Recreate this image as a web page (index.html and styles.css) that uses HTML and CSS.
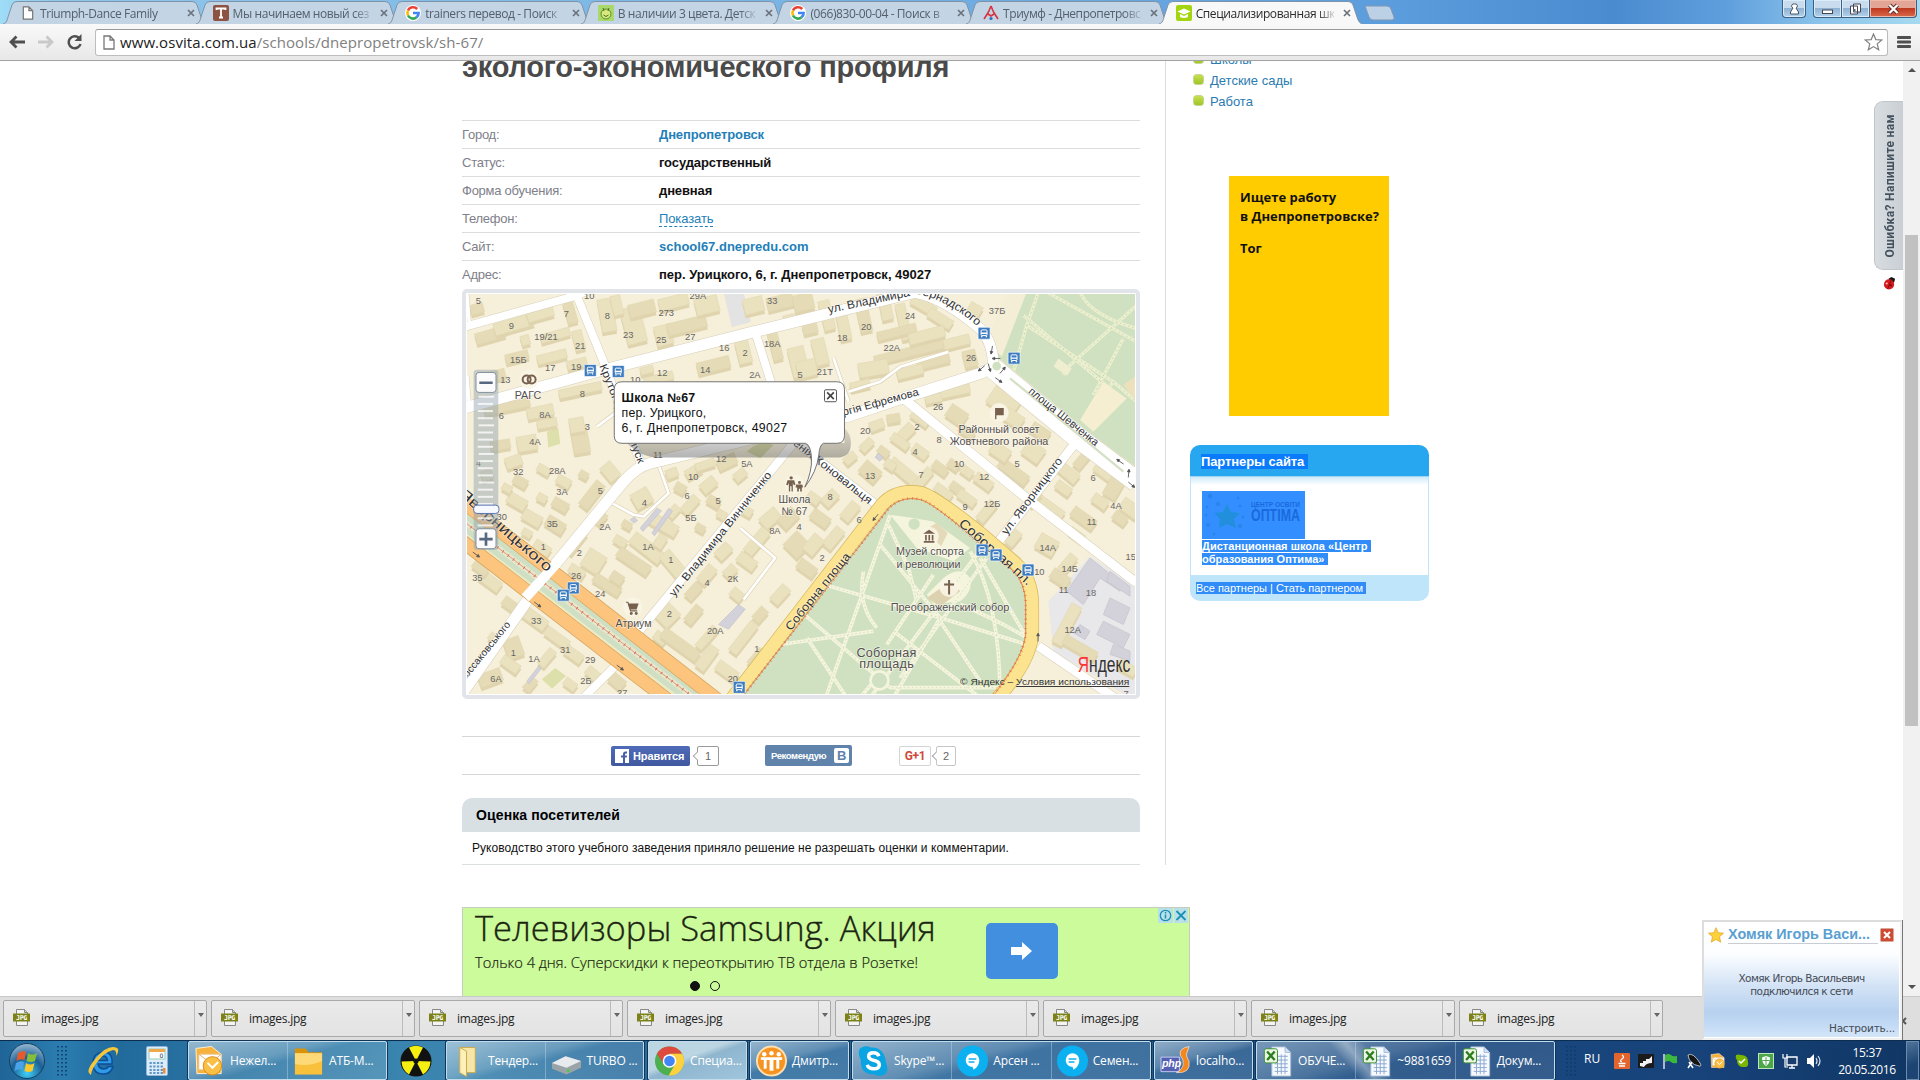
FILE: index.html
```html
<!DOCTYPE html>
<html lang="ru">
<head>
<meta charset="utf-8">
<title>Специализированная школа</title>
<link rel="stylesheet" href="styles.css">
</head>
<body>
<svg class="defs" width="0" height="0">
  <defs>
    <symbol id="tabshape" viewBox="0 0 204 24" preserveAspectRatio="none"><path d="M0 24 C4 23 4 20 6 14 L9 5 Q10 1.5 14 1.5 H189 Q193 1.5 194 5 L198 17 Q200 24 204 24" stroke="#7f93a8"/></symbol>
    <symbol id="page" viewBox="0 0 12 15"><path d="M1 1h6l4 4v9H1zM7 1v4h4" fill="#fff" stroke="#777" stroke-width="1.3"/></symbol>
    <symbol id="google" viewBox="0 0 16 16"><circle cx="8" cy="8" r="8" fill="#fff"/><g fill="none" stroke-width="2.6"><path d="M12.2 4A5.6 5.6 0 0 0 3 5.5" stroke="#e94335"/><path d="M3 5.5a5.6 5.6 0 0 0 0 5" stroke="#fbbc05"/><path d="M3 10.5a5.6 5.6 0 0 0 8.6 1.8" stroke="#34a853"/><path d="M11.6 12.3A5.6 5.6 0 0 0 13.6 8H8" stroke="#4285f4"/></g></symbol>
    <symbol id="x" viewBox="0 0 8 8"><path d="M1 1l6 6M7 1L1 7" stroke="#6a737c" stroke-width="1.7"/></symbol>
    <symbol id="jpg" viewBox="0 0 17 17"><path d="M3.500.5h8l3 3v13h-11z" fill="#f4f4f4" stroke="#888"/><path d="M11.500.5v3h3" fill="#ccc" stroke="#888"/><path d="M0 4.500h17v8H0z" fill="#7d8216"/><text x="8.500" y="11.200" text-anchor="middle" class="jpgtext">JPG</text></symbol>
    <symbol id="excel" viewBox="0 0 30 34"><path d="M9 2h14l6 6v25H9z" fill="#f6faff" stroke="#a8bcd4"/><path d="M23 2v6h6" fill="#cfe0f2" stroke="#a8bcd4"/><path d="M12 12h14M12 16h14M12 20h14M12 24h14M12 28h14M15 10v21M19 10v21M23 10v21" stroke="#8aa6cf" fill="none"/><rect x="1" y="4" width="14" height="15" rx="2" fill="#e9f6e4" stroke="#3b8f2e"/><path d="M4 7l8 9M12 7l-8 9" stroke="#2b7d1e" stroke-width="2.500"/></symbol>
    <symbol id="chat" viewBox="0 0 32 32"><circle cx="16" cy="16" r="16" fill="#0bb0f0"/><path d="M16 8a7 7 0 0 0-7 7c0 5 4 7 7 7l1 3c4-2 6-6 6-10a7 7 0 0 0-7-7z" fill="#fff"/><path d="M12 14h8M12 17h6" stroke="#0bb0f0" stroke-width="1.500"/></symbol>
    <symbol id="outlook" viewBox="0 0 32 32"><path d="M2 3 18 1l10 8v20H3z" fill="#f6b23c" stroke="#fff3d6"/><path d="M5 9h23v16H5z" fill="#fff" stroke="#e6c79a"/><path d="M5 9l12 9L28 9" fill="none" stroke="#e6b36a"/><circle cx="19" cy="21" r="9.500" fill="#f9c045" stroke="#d98a12"/><path d="M14 18l5 5 6-6" fill="none" stroke="#fff" stroke-width="2"/></symbol>
    <symbol id="grip" viewBox="0 0 10 30"><path d="M1 0v30M5 0v30M9 0v30" stroke="#0e3a66" stroke-width="1.600" stroke-dasharray="1.600 2.400"/></symbol>
  </defs>
</svg>

<div class="desktop">
  <header class="titlebar">
    <div class="tabs">
      <div class="tab"><svg class="shape"><use href="#tabshape"/></svg><svg class="fav thin"><use href="#page"/></svg><span class="name">Triumph-Dance Family</span><svg class="close"><use href="#x"/></svg></div>
      <div class="tab"><svg class="shape"><use href="#tabshape"/></svg><svg class="fav" viewBox="0 0 16 16"><rect width="16" height="16" rx="2" fill="#8d5342"/><path d="M3.500 5V3.500h9V5M8 3.500v9M6 12.500h4" stroke="#fff" stroke-width="1.800" fill="none"/></svg><span class="name">Мы начинаем новый сез</span><svg class="close"><use href="#x"/></svg></div>
      <div class="tab"><svg class="shape"><use href="#tabshape"/></svg><svg class="fav"><use href="#google"/></svg><span class="name">trainers перевод - Поиск</span><svg class="close"><use href="#x"/></svg></div>
      <div class="tab"><svg class="shape"><use href="#tabshape"/></svg><svg class="fav" viewBox="0 0 16 16"><rect width="16" height="16" fill="#a9d96b"/><circle cx="8" cy="9" r="5" fill="#d9e87a" stroke="#5d8a2c"/><path d="M5 3l1 3M11 3l-1 3M5.500 10q2.500 3 5 0" stroke="#466b22" fill="none"/></svg><span class="name">В наличии 3 цвета. Детск</span><svg class="close"><use href="#x"/></svg></div>
      <div class="tab"><svg class="shape"><use href="#tabshape"/></svg><svg class="fav"><use href="#google"/></svg><span class="name">(066)830-00-04 - Поиск в</span><svg class="close"><use href="#x"/></svg></div>
      <div class="tab"><svg class="shape"><use href="#tabshape"/></svg><svg class="fav" viewBox="0 0 16 16"><path d="M8 1L5.500 7M8 1l2.500 6M5.500 7L1 14M10.500 7L15 14M5 9l3 2 3-2" stroke="#d8323c" stroke-width="1.600" fill="none"/><circle cx="8" cy="13.500" r="1.600" fill="#2a6fc0"/></svg><span class="name">Триумф - Днепропетровс</span><svg class="close"><use href="#x"/></svg></div>
      <div class="tab active"><svg class="shape"><use href="#tabshape"/></svg><svg class="fav" viewBox="0 0 16 16"><rect width="16" height="16" rx="2" fill="#a2d50f"/><path d="M1.500 6.500L8 3.500l6.500 3L8 9.500zM4 9v3q4 2 8 0V9l-4 2z" fill="#fff"/></svg><span class="name">Специализированная шк</span><svg class="close"><use href="#x"/></svg></div>
    </div>
    <svg class="newtab" viewBox="0 0 32 16"><path d="M1 1h22q3 0 4 3l3 8q1 3-2 3H9q-3 0-4-3z" fill="#bcd0e6" stroke="#7f97b5"/></svg>
    <div class="winbtns">
      <div class="wb user"><svg viewBox="0 0 10 12"><path d="M5 1a2 2 0 0 1 1.500 4L9 9v2H1V9l2.500-4A2 2 0 0 1 5 1z" fill="#fff" stroke="#456"/></svg></div>
      <div class="wb min"><svg viewBox="0 0 12 12"><rect x="1" y="7" width="10" height="3.500" fill="#fff" stroke="#445"/></svg></div>
      <div class="wb max"><svg viewBox="0 0 12 12"><path d="M4 1h7v8H4zM1 3h7v8H1z" fill="#fff" stroke="#445"/><path d="M3.500 6h2.500v2.500H3.500z" fill="#567"/></svg></div>
      <div class="wb cls"><svg viewBox="0 0 12 12"><path d="M2 2l8 8M10 2l-8 8" stroke="#5b2a26" stroke-width="4"/><path d="M2 2l8 8M10 2l-8 8" stroke="#fff" stroke-width="2.300"/></svg></div>
    </div>
  </header>

  <nav class="toolbar">
    <svg class="nav" viewBox="0 0 18 16"><path d="M17 8H3M8.500 2.500L3 8l5.500 5.500" fill="none" stroke="#4f4f4f" stroke-width="2.800"/></svg>
    <svg class="nav" viewBox="0 0 18 16"><path d="M1 8h14M9.500 2.500L15 8l-5.500 5.500" fill="none" stroke="#c9c9c9" stroke-width="2.800"/></svg>
    <svg class="nav" viewBox="0 0 18 16"><path d="M14.500 10A6 6 0 1 1 13 4" fill="none" stroke="#4f4f4f" stroke-width="2.500"/><path d="M15.500 0v7h-7z" fill="#4f4f4f"/></svg>
    <div class="omnibox"><svg class="pg"><use href="#page"/></svg><span class="url"><b>www.osvita.com.ua</b>/schools/dnepropetrovsk/sh-67/</span>
      <svg class="star" viewBox="0 0 18 18"><path d="M9 1l2.300 5.600 6 .4-4.600 3.900 1.500 5.900L9 13.600l-5.200 3.200 1.500-5.900L.7 7l6-.4z" fill="#fff" stroke="#808080" stroke-width="1.200"/></svg></div>
    <svg class="menu" viewBox="0 0 14 14"><path d="M1 2.500h12M1 7h12M1 11.500h12" stroke="#505050" stroke-width="2.800" stroke-linecap="round"/></svg>
  </nav>

  <div class="viewport">
    <main class="main">
      <h1>эколого-экономического профиля</h1>
      <dl class="info">
        <div><dt>Город:</dt><dd class="lk">Днепропетровск</dd></div>
        <div><dt>Статус:</dt><dd>государственный</dd></div>
        <div><dt>Форма обучения:</dt><dd>дневная</dd></div>
        <div><dt>Телефон:</dt><dd><span class="show">Показать</span></dd></div>
        <div><dt>Сайт:</dt><dd class="lk site">school67.dnepredu.com</dd></div>
        <div><dt>Адрес:</dt><dd class="addr">пер. Урицкого, 6, г. Днепропетровск, 49027</dd></div>
      </dl>
      <div class="map"><svg id="map" viewBox="20 26 2005 1203" preserveAspectRatio="none"></svg></div>

      <div class="social">
        <div class="fb"><svg viewBox="0 0 14 14"><rect width="14" height="14" fill="#fff"/><path d="M8 14V8.500h-2V6.500h2V5q0-2.500 2.500-2.500H12v2h-1Q10 4.500 10 5.500v1h2l-.3 2H10V14z" fill="#4760aa"/></svg>Нравится</div><div class="cnt dark">1</div>
        <div class="vk">Рекомендую<span>B</span></div>
        <div class="gp">G+1</div><div class="cnt">2</div>
      </div>

      <h2 class="rate">Оценка посетителей</h2>
      <p class="note">Руководство этого учебного заведения приняло решение не разрешать оценки и комментарии.</p>

      <div class="banner">
        <div class="copy">
          <div class="big">Телевизоры Samsung. Акция</div>
          <div class="small">Только 4 дня. Суперскидки к переоткрытию ТВ отдела в Розетке!</div>
          <div class="dots"><i class="on"></i><i></i></div>
        </div>
        <div class="go"><svg viewBox="0 0 22 20"><path d="M0 6h11V1l10 9-10 9v-5H0z" fill="#fff"/></svg></div>
        <div class="choices"><svg viewBox="0 0 30 15"><rect width="15" height="15" fill="#b9dfe8"/><rect x="16" width="14" height="15" fill="#b9dfe8"/><circle cx="7.500" cy="7.500" r="5.200" fill="none" stroke="#1791b5" stroke-width="1.300"/><path d="M7.500 6.500v4M7.500 4v1.500" stroke="#1791b5" stroke-width="1.500"/><path d="M18.500 3l9 9M27.500 3l-9 9" stroke="#1791b5" stroke-width="1.800"/></svg></div>
      </div>
    </main>

    <aside class="side">
      <ul class="links"><li>Школы</li><li>Детские сады</li><li>Работа</li></ul>
      <div class="job"><p>Ищете работу<br>в Днепропетровске?</p><p>Тог</p></div>
      <section class="partners">
        <h3><span>Партнеры сайта&nbsp;</span></h3>
        <div class="pbody">
          <svg class="optima" viewBox="0 0 103 48"><rect width="103" height="48" fill="#338fff"/><path d="M25 13l4 8 9 1-6 6 2 9-9-4-8 4 1-9-6-6 9-1z" fill="#218fdc"/><g fill="#2a84ea"><circle cx="8" cy="5" r="2.500"/><circle cx="16" cy="13" r="2"/><circle cx="5" cy="16" r="1.500"/><circle cx="36" cy="7" r="1.500"/><circle cx="38" cy="15" r="1.500"/><circle cx="4" cy="24" r="1.500"/><circle cx="41" cy="26" r="1.500"/><circle cx="6" cy="34" r="2"/><circle cx="12" cy="43" r="1.500"/><circle cx="38" cy="35" r="2"/></g><text x="49" y="15.500" textLength="49" class="o1">ЦЕНТР ОСВІТИ</text><text x="49" y="30" textLength="49" lengthAdjust="spacingAndGlyphs" class="o2">ОПТІМА</text></svg>
          <p><span>Дистанционная школа «Центр&nbsp;</span><br><span>образования Оптима»&nbsp;</span></p>
        </div>
        <footer><span>Все партнеры | Стать партнером&nbsp;</span></footer>
      </section>
    </aside>

    <div class="feedback"><div class="fbtab"><span>Ошибка? Напишите нам</span></div>
      <svg class="bug" viewBox="0 0 14 16"><path d="M6 3l3-2 4 2-1 4-5 0z" fill="#151515"/><ellipse cx="6.500" cy="9" rx="5.500" ry="5.500" fill="#d6191d"/><path d="M9 4L5 14" stroke="#7b0c0c"/><circle cx="4" cy="8" r="1.200" fill="#fbb"/><circle cx="8.500" cy="10" r="1" fill="#500"/></svg></div>
    <div class="scroll"><svg viewBox="0 0 10 6"><path d="M0 6L5 1l5 5z" fill="#505050"/></svg><div class="thumb"></div><svg viewBox="0 0 10 6"><path d="M0 0l5 5 5-5z" fill="#505050"/></svg></div>
  </div>

  <div class="downloads">
    <div class="dl"><svg><use href="#jpg"/></svg><span>images.jpg</span><i></i></div><div class="dl"><svg><use href="#jpg"/></svg><span>images.jpg</span><i></i></div><div class="dl"><svg><use href="#jpg"/></svg><span>images.jpg</span><i></i></div><div class="dl"><svg><use href="#jpg"/></svg><span>images.jpg</span><i></i></div><div class="dl"><svg><use href="#jpg"/></svg><span>images.jpg</span><i></i></div><div class="dl"><svg><use href="#jpg"/></svg><span>images.jpg</span><i></i></div><div class="dl"><svg><use href="#jpg"/></svg><span>images.jpg</span><i></i></div><div class="dl"><svg><use href="#jpg"/></svg><span>images.jpg</span><i></i></div>
    <svg class="dlx" viewBox="0 0 8 8"><path d="M1 1l6 6M7 1L1 7" stroke="#555" stroke-width="2"/></svg>
  </div>

  <div class="taskbar">
    <svg class="orb" viewBox="0 0 38 38"><defs><radialGradient id="og" cx=".5" cy=".85" r=".9"><stop offset="0" stop-color="#3fd0f8"/><stop offset=".5" stop-color="#1c5f94"/><stop offset="1" stop-color="#a9c6da"/></radialGradient></defs><circle cx="19" cy="19" r="17.500" fill="url(#og)" stroke="#123f63"/><path d="M10 11q4-3 8-1l-1.500 8q-4-2-8 1z" fill="#e8592c"/><path d="M20 11q4 3 9 0l-2 8q-4 2-8.500 0z" fill="#86bf3a"/><path d="M8 21q4-3 8-1l-1.500 8q-4-2-8 1z" fill="#4aa3e8"/><path d="M18 21q4 3 8.500 0l-2 8q-4 2-8 0z" fill="#fac92c"/></svg>
    <svg class="grip g1"><use href="#grip"/></svg>
    <svg class="ie" viewBox="0 0 34 32"><path d="M26 19H12q1 5 6 5 3 0 4.500-2.500H27Q25 29 17.500 29 7 29 7 18.500T17.500 7Q27 7 26 19zM12 15.500h9.500Q21 11 17 11t-5 4.500z" fill="#2f9be8" stroke="#0c4f96" stroke-width="1.500"/><path d="M5 30Q-2 27 10 13T31 3q3 2-1 8 1-6-3-6-8 2-15 11T5 30z" fill="#f5c53a"/></svg>
    <svg class="calc" viewBox="0 0 22 30"><rect x=".5" y=".5" width="21" height="29" rx="1.500" fill="#dcecf8" stroke="#8fb4d4"/><rect x="3" y="3" width="16" height="10" fill="#fbfdff" stroke="#9cb"/><path d="M3 3h16v3H3z" fill="#efa94b"/><path d="M3.500 17h14M3.500 20.500h14M3.500 24h14M3.500 27h14" stroke="#5f96c8" stroke-width="2" stroke-dasharray="2.300 1.400"/><path d="M17 22h2.500v5.500H17z" fill="#ee8d2c"/><text x="13.500" y="12" class="z">0</text></svg>

    <div class="grp w2"><div><svg viewBox="0 0 32 32"><use href="#outlook"/></svg><span>Нежел...</span></div><div><svg viewBox="0 0 32 32"><path d="M2 3h11l3 4h14v22H2z" fill="#d9930b"/><path d="M2 8h28v22H2z" fill="#f9c03c"/><path d="M2 8h28v8q-14 6-28 3z" fill="#fdda77"/></svg><span>АТБ-М...</span></div></div>
    <svg class="rad" viewBox="0 0 32 32"><circle cx="16" cy="16" r="15.500" fill="#111"/><path d="M16 16L9 2.500Q16-1 23 2.500zM16 16L1.500 16.500Q2 25 9 29.500zM16 16l14.500.5Q30 25 23 29.500z" fill="#f5ef12"/><circle cx="16" cy="16" r="2.600" fill="#111"/></svg>
    <div class="grp w2b"><div><svg viewBox="0 0 32 32"><path d="M8 2h16v26H8z" fill="#f6e6a8" stroke="#c9a94a"/><path d="M8 2l7 4v26l-7-4z" fill="#fdf0b9" stroke="#cba94b"/></svg><span>Тендер...</span></div><div><svg viewBox="0 0 32 32"><path d="M1 18L15 11l16 5v7l-15 7-15-6z" fill="#9aa3a8"/><path d="M1 18L15 11l16 5-15 7z" fill="#e7ebee"/><circle cx="18" cy="26" r="1.500" fill="#4c4"/></svg><span>TURBO ...</span></div></div>
    <div class="grp w1 lit"><div><svg viewBox="0 0 32 32"><circle cx="16" cy="16" r="15" fill="#4caf50"/><path d="M3 8.500A15 15 0 0 1 29 8.500H16L10 19z" fill="#dd4b3e"/><path d="M29 8.500A15 15 0 0 1 15 31l7-12-6-10.500z" fill="#fdd23e"/><circle cx="16" cy="16" r="7" fill="#fff"/><circle cx="16" cy="16" r="5.500" fill="#4285f4"/></svg><span>Специа...</span></div></div>
    <div class="grp w1"><div><svg viewBox="0 0 32 32"><circle cx="16" cy="16" r="15" fill="#f79421" stroke="#fde0b0" stroke-width="2"/><g fill="#fff"><circle cx="8.500" cy="9" r="2.300"/><circle cx="16" cy="8" r="2.300"/><circle cx="23.500" cy="9" r="2.300"/><path d="M5 12h22v3h-3v9h-3v-9h-3v11h-4V15h-3v9H8v-9H5z"/></g></svg><span>Дмитр...</span></div></div>
    <div class="grp w3"><div><svg viewBox="0 0 32 32"><path d="M2 3Q8-1 13 2 27 1 29 18q4 10-4 13-5 1-8-1Q2 30 3 15-1 8 2 3z" fill="#0aa4e2"/><path d="M21.500 11q-1-3.500-5.500-3.500-5 0-5 3.500 0 3 5 4.200 6 1.200 6 4.800 0 4-6 4-5 0-6.500-4" fill="none" stroke="#fff" stroke-width="3.600"/></svg><span>Skype™...</span></div><div><svg><use href="#chat"/></svg><span>Арсен ...</span></div><div><svg><use href="#chat"/></svg><span>Семен...</span></div></div>
    <div class="grp w1"><div><svg viewBox="0 0 32 32"><path d="M1 12h19v15H1z" fill="#5560b4" stroke="#c8cbee"/><text x="2" y="22" class="php">php</text><path d="M30 1q-11 2-9 9 4 5 3 10-1 5-7 8 15 1 13-12-4-6-2-9z" fill="#f5871f" stroke="#fff" stroke-width=".6"/></svg><span>localho...</span></div></div>
    <div class="grp w3 xl"><div><svg><use href="#excel"/></svg><span>ОБУЧЕ...</span></div><div><svg><use href="#excel"/></svg><span>~9881659</span></div><div><svg><use href="#excel"/></svg><span>Докум...</span></div></div>
    <svg class="grip g2"><use href="#grip"/></svg>
    <span class="lang">RU</span>
    <div class="tray">
      <svg viewBox="0 0 16 16"><rect width="16" height="16" rx="1" fill="#e3642c"/><path d="M8 2q3 2 0 4t0 3M4.500 10.500h7M5 13h6" stroke="#fff" fill="none" stroke-width="1.300"/></svg>
      <svg viewBox="0 0 16 16"><rect y="1" width="16" height="14" fill="#1b1b1b"/><path d="M2 13v-3h3V8h3V6h3L14 3v7q-6 0-8 4z" fill="#f2f2f2"/></svg>
      <svg viewBox="0 0 16 16"><path d="M2 1v15" stroke="#dde" stroke-width="1.500"/><path d="M3 2q4-2 6 0t6 1v7q-4 1-6-1T3 9z" fill="#3db83f"/></svg>
      <svg viewBox="0 0 16 16"><path d="M2 2q5-3 12 8 2 4-1 3Q3 11 2 2z" fill="#151515" stroke="#ddd" stroke-width=".8"/><path d="M3 9l4 6M6 9l-4 6" stroke="#fff" stroke-width="1.500"/></svg>
      <svg viewBox="0 0 32 32"><use href="#outlook"/></svg>
      <svg viewBox="0 0 16 16"><path d="M2 2q3-1 5 0 7 0 7 7 1 5-3 5-8 1-8-7-2-2-1-5z" fill="#7ab800"/><path d="M5 8l2 2 4-4" stroke="#fff" fill="none" stroke-width="1.500"/></svg>
      <svg viewBox="0 0 16 16"><rect x=".5" y=".5" width="15" height="15" fill="#4ca64a" stroke="#bfe5bd"/><path d="M8 3l4 1.500q0 6-4 8.500-4-2.500-4-8.500z" fill="#fff"/><path d="M8 4v8M4.500 7.500h7" stroke="#4ca64a"/></svg>
      <svg viewBox="0 0 16 16"><path d="M5 4h10v8H5zM7 15h6M10 12v3" fill="#1b3d6b" stroke="#fff" stroke-width="1.300"/><path d="M1 1v4h4V1M3 5v9h3" fill="none" stroke="#fff" stroke-width="1.200"/></svg>
      <svg viewBox="0 0 16 16"><path d="M1 5h3l4-4v14l-4-4H1z" fill="#fff"/><path d="M10 5q2 3 0 6M12 3q4 5 0 10" fill="none" stroke="#dfe9f5" stroke-width="1.200"/></svg>
    </div>
    <div class="clock">15:37<br>20.05.2016</div>
    <div class="peek"></div>
  </div>

  <div class="toast">
    <div class="thead"><svg viewBox="0 0 16 16"><path d="M8 .7l2.200 5 5.300.5-4 3.600 1.200 5.400L8 12.400l-4.700 2.800 1.200-5.400-4-3.600 5.300-.5z" fill="#fbd23c" stroke="#e0a01c" stroke-width=".7"/></svg><b>Хомяк Игорь Васи...</b><svg class="tx" viewBox="0 0 14 14"><rect x=".5" y=".5" width="13" height="13" rx="1" fill="#cf4a33" stroke="#d9a79e"/><path d="M4 4l6 6M10 4l-6 6" stroke="#fff" stroke-width="2"/></svg></div>
    <p>Хомяк Игорь Васильевич<br>подключился к сети</p>
    <div class="conf">Настроить...</div>
  </div>
</div>
<script src="map.js"></script>
</body>
</html>
```

FILE: styles.css
```css
* { box-sizing: border-box; }
body { margin: 0; width: 1920px; height: 1080px; overflow: hidden; background: #fff; font-family: "Liberation Sans", Arial, sans-serif; }
p, h1, h2, h3, dl, dd, ul { margin: 0; padding: 0; }
.defs { position: absolute; }
.desktop { position: relative; width: 1920px; height: 1080px; display: flex; flex-direction: column; }

/* tab strip */
.titlebar { flex: none; height: 24px; display: flex; background: linear-gradient(90deg, #9fdcf6 0, #8fc6ec 60px, #78b4e4 40%, #5b9cdc 73%, #4a8bd0 84%, #5f9fdd 90%, #8cc4ea 95%, #a6daf0 100%); font: 12px "Open Sans", sans-serif; }
.tabs { display: flex; padding-left: 3px; }
.tab { position: relative; width: 204px; margin-right: -11.4px; height: 24px; display: flex; align-items: center; padding: 2px 14px 0 17px; color: #54606c; }
.shape { position: absolute; left: 0; top: 0; width: 204px; height: 24px; fill: #c3d4e5; }
.active .shape { fill: #f8f8f8; }
.active { color: #2b2b2b; z-index: 2; }
.fav { position: relative; flex: none; width: 16px; height: 16px; }
.fav.thin { width: 16px; height: 14px; }
.name { position: relative; width: 138px; margin-left: 4px; flex: none; overflow: hidden; white-space: nowrap; letter-spacing: -.42px; -webkit-mask-image: linear-gradient(90deg, #000 88%, rgba(0,0,0,.2)); mask-image: linear-gradient(90deg, #000 88%, rgba(0,0,0,.2)); }
.close { position: relative; flex: none; width: 8px; height: 8px; margin-left: 9px; }
.newtab { width: 32px; height: 16px; margin: 5px 0 0 13px; }
.winbtns { display: flex; margin: 0 3px 0 auto; height: 18px; }
.wb { display: flex; align-items: center; justify-content: center; height: 18px; border: 1px solid #3c5f85; border-top: 0; background: linear-gradient(#c8dcee 45%, #8fb2d2 50%, #b4d2ea); box-shadow: inset 0 0 0 1px #dcebf8; }
.wb svg { width: 13px; height: 12px; }
.user { width: 24px; margin-right: 7px; border-radius: 0 0 4px 4px; }
.min { width: 29px; border-radius: 0 0 0 4px; }
.max { width: 28px; border-left: 0; }
.cls { width: 47px; border-left: 0; border-radius: 0 0 4px 0; background: linear-gradient(#e2a596 45%, #bf3a21 50%, #d9694a); box-shadow: inset 0 0 0 1px #edb9a8; }

/* toolbar */
.toolbar { flex: none; height: 37px; display: flex; align-items: center; padding: 0 9px 0 8px; background: linear-gradient(#f9f9f9, #e8e8e8); border-bottom: 1px solid #a3a3a3; }
.nav { width: 18px; height: 16px; margin-right: 11px; }
.omnibox { width: 1793px; height: 27px; display: flex; align-items: center; background: #fff; border: 1px solid #bdbdbd; border-top-color: #999; border-radius: 3px; padding: 0 4px 0 7px; }
.pg { width: 12px; height: 15px; margin-right: 5px; }
.url { font: 15px "Open Sans", sans-serif; letter-spacing: .07px; color: #808080; flex: 1; }
.url b { font-weight: 400; color: #222; }
.star { width: 19px; height: 18px; }
.menu { width: 14px; height: 14px; margin-left: auto; }

/* page */
.viewport { flex: none; height: 935px; position: relative; overflow: hidden; display: flex; padding-left: 462px; }
.main { width: 704px; height: 804px; border-right: 1px solid #dcdcdc; flex: none; }
.main > * { width: 678px; }
h1 { height: 71px; font-size: 29px; line-height: 34px; margin-top: -12px; padding-top: 1px; color: #4a4a4a; letter-spacing: -.21px; white-space: nowrap; }
.info { font-size: 13px; }
.info div { display: flex; height: 28px; align-items: center; border-top: 1px solid #dcdcdf; }
.info dt { width: 197px; color: #80808a; letter-spacing: -.25px; }
.info dd { font-weight: 700; color: #111; letter-spacing: -.12px; }
.info .lk { color: #247fb8; }
.info .site, .info .addr { letter-spacing: 0; }
.show { font-weight: 400; color: #247fb8; border-bottom: 1px dashed #247fb8; letter-spacing: -.1px; }
.map { height: 410px; margin-top: 1px; border: 4px solid #e1e4e8; border-radius: 5px; padding: 1px; }
.map svg { display: block; width: 668px; height: 400px; }
.social { margin-top: 37px; height: 39px; border: solid #d6d6d9; border-width: 1px 0; display: flex; align-items: center; padding-left: 149px; font-size: 12px; }
.fb { width: 79px; height: 20px; background: linear-gradient(#4f6bb8, #40589f); border-radius: 2px; color: #fff; font: bold 11px "Liberation Sans"; display: flex; align-items: center; gap: 4px; padding-left: 4px; letter-spacing: -.1px; }
.fb svg { width: 14px; height: 14px; flex: none; }
.cnt { position: relative; height: 20px; width: 20px; margin-left: 5px; border: 1px solid #c6c6c6; border-radius: 2px; text-align: center; line-height: 18px; color: #666; font-size: 11px; }
.cnt.dark { width: 22px; border-color: #999; margin-left: 7px; }
.cnt::before { content: ""; position: absolute; left: -4px; top: 6px; width: 5px; height: 5px; border: solid #aaa; border-width: 0 0 1px 1px; transform: rotate(45deg); background: #fff; }
.vk { margin-left: 46px; width: 87px; height: 21px; border-radius: 2px; background: #5f83aa; color: #fff; font: bold 9.500px "Liberation Sans"; display: flex; align-items: center; justify-content: space-between; padding: 0 3px 0 6px; letter-spacing: -.4px; }
.vk span { width: 15px; height: 15px; border-radius: 2px; background: #fff; color: #5f83aa; font-size: 13px; line-height: 15px; text-align: center; }
.gp { margin-left: 47px; width: 32px; height: 20px; border: 1px solid #d4d4d4; border-radius: 2px; color: #d1493b; font: bold 12px/18px "Roboto"; text-align: center; letter-spacing: -.3px; }
.rate { margin-top: 23px; height: 34px; border-radius: 10px 10px 0 0; background: #d9e0e4; padding-left: 14px; font: bold 14px/35px "Liberation Sans"; letter-spacing: .12px; color: #000; }
.note { height: 33px; border-bottom: 1px solid #dcdfe0; padding-left: 10px; font-size: 12px; line-height: 32px; color: #111; letter-spacing: .05px; white-space: nowrap; }
.main .banner { position: relative; z-index: 2; width: 728px; height: 100px; margin-top: 42px; background: #ccfb9b; border: 1px solid #c6cdbd; display: flex; padding-left: 12px; color: #1b2412; font-family: "Open Sans"; }
.copy { width: 511px; white-space: nowrap; }
.big { font-weight: 300; font-size: 34.500px; line-height: 39px; height: 44px; -webkit-text-stroke: .35px #1b2412; }
.small { font-size: 14.650px; font-weight: 300; line-height: 21px; height: 22px; -webkit-text-stroke: .2px #1b2412; }
.dots { display: flex; gap: 10px; padding: 7px 0 0 215px; }
.dots i { width: 10px; height: 10px; border: 1px solid #111; border-radius: 50%; }
.dots .on { background: #111; }
.go { width: 72px; height: 56px; margin-top: 15px; border-radius: 5px; background: #418fde; display: flex; align-items: center; justify-content: center; }
.go svg { width: 22px; height: 20px; }
.choices { margin-left: auto; }
.choices svg { display: block; width: 32px; height: 15px; }

.side { width: 264px; padding-left: 24px; }
.links { list-style: none; margin-top: -12px; font-size: 13px; color: #2b7bb0; }
.links li { height: 21px; line-height: 21px; display: flex; align-items: center; gap: 7px; padding-left: 4px; }
.links li::before { content: ""; width: 9px; height: 9px; margin-top: -2px; border-radius: 2px; background: linear-gradient(#c6e04f, #9fc528); box-shadow: 0 0 0 .5px #8fae2a; }
.job { width: 160px; height: 240px; margin: 64px 0 0 39px; background: #fc0; padding: 12px 11px; font: bold 13px/19px "Open Sans"; color: #111; white-space: nowrap; }
.job p + p { margin-top: 13px; }
.partners { width: 239px; height: 156px; margin-top: 29px; border-radius: 10px; overflow: hidden; background: #fff; display: flex; flex-direction: column; }
.partners span { background: #2f8cf8; color: #fff; }
.partners h3 { height: 32px; background: #27a7f0; border-bottom: 1px solid #9fd4f2; padding-left: 11px; font-size: 13px; line-height: 33px; letter-spacing: -.1px; }
.partners h3 span { background: #0a7bfb; }
.pbody { flex: 1; border: solid #bfe5fa; border-width: 0 1px; background: linear-gradient(#cfeafa, #fff 8px); padding: 14px 0 0 11px; font: bold 11px/13px "Liberation Sans"; letter-spacing: .05px; }
.optima { display: block; width: 103px; height: 48px; margin-bottom: 1px; }
.o1 { font: bold 6.500px "Liberation Sans"; fill: #1a6ade; }
.o2 { font: bold 16px "Liberation Sans"; fill: #1a6ade; }
.partners footer { height: 26px; background: #bfe5fa; padding-left: 6px; font-size: 11px; line-height: 26px; letter-spacing: -.02px; }

.feedback { position: absolute; right: 17px; top: 40px; width: 29px; }
.fbtab { height: 169px; border: 1px solid #c0c5ca; border-right: 0; border-radius: 9px 0 0 9px; background: linear-gradient(90deg, #d8dde1, #c9cfd4); display: flex; align-items: center; justify-content: center; }
.fbtab span { writing-mode: vertical-rl; transform: rotate(180deg); font: bold 12px "Roboto"; color: #43525e; letter-spacing: .35px; white-space: nowrap; margin-left: 2px; }
.bug { display: block; width: 13px; height: 15px; margin: 6px 0 0 9px; }
.scroll { position: absolute; right: 0; top: 0; width: 17px; height: 935px; background: #f1f1f1; display: flex; flex-direction: column; align-items: center; padding: 6px 0; }
.scroll svg { width: 8px; height: 5px; }
.thumb { width: 13px; height: 491px; margin: 163px 0 auto; background: #c1c1c1; }

/* downloads */
.downloads { flex: none; height: 44px; background: #dedede; border-top: 1px solid #c9c9c9; display: flex; gap: 4px; padding: 3px 0 0 3px; }
.dl { width: 204px; height: 37px; border: 1px solid #a9a9a9; border-radius: 2px; background: linear-gradient(#eaeaea, #e3e3e3); display: flex; align-items: center; padding-left: 9px; font: 12px "Open Sans"; color: #222; letter-spacing: -.25px; }
.dl svg { width: 17px; height: 17px; margin: -3px 11px 0 0; }
.dl span { flex: 1; }
.dl i { width: 12px; height: 35px; border-left: 1px solid #bbb; display: flex; }
.dl i::before { content: ""; margin: 12px 0 0 3px; width: 0; height: 0; border: 3px solid transparent; border-top: 4px solid #666; border-bottom: 0; }
.jpgtext { font: bold 6.500px "DejaVu Sans Mono"; fill: #fff; }
.dlx { width: 8px; height: 8px; margin: 17px 0 0 232px; }

/* taskbar */
.taskbar { flex: none; height: 40px; border-top: 1px solid #0b2e50; display: flex; align-items: center; background: linear-gradient(90deg, #1f6496 0, #2b7db0 60px, #216a9c 120px, #3b86b0 420px, #2a6c9e 640px, #235e93 1100px, #1a4a80 1400px, #17427a 1700px, #103663 1920px); font: 12px "Open Sans"; color: #fff; }
.taskbar > * { flex: none; }
.orb { width: 38px; height: 38px; margin-left: 8px; }
.grip { width: 10px; height: 30px; }
.g1 { margin-left: 11px; }
.ie { width: 34px; height: 32px; margin-left: 19px; }
.calc { width: 22px; height: 30px; margin-left: 26px; }
.z { font: 6px "DejaVu Sans"; fill: #234; }
.grp { height: 39px; border: 1px solid #c2dcec; box-shadow: 0 0 0 1px #0f3558; border-radius: 2px; display: flex; background: linear-gradient(165deg, rgba(255,255,255,.5) 0, rgba(255,255,255,.27) 40%, rgba(255,255,255,.12) 50%, rgba(255,255,255,.15)); }
.grp > div { flex: 1; display: flex; align-items: center; padding-left: 5px; white-space: nowrap; letter-spacing: -.15px; }
.grp > div + div { border-left: 1px solid rgba(220,235,250,.35); }
.grp svg { width: 31px; height: 32px; margin-right: 5px; flex: none; }
.w2 { width: 199px; margin-left: 20px; }
.rad { width: 32px; height: 32px; margin-left: 13px; }
.w2b { width: 198px; margin-left: 14px; }
.w1 { width: 99px; margin-left: 3px; }
.lit { margin-left: 4px; background: linear-gradient(160deg, #bcd5e2 40%, #8fb6cf 50%, #9fc6dc); }
.w3 { width: 299px; margin-left: 3px; }
.xl { background: linear-gradient(50deg, transparent 31%, rgba(255,255,255,.35) 36%, transparent 42%), linear-gradient(165deg, rgba(255,255,255,.4) 0, rgba(255,255,255,.2) 40%, rgba(255,255,255,.1) 50%, rgba(255,255,255,.12)); }
.php { font: italic bold 11px "Liberation Sans"; fill: #fff; }
.g2 { margin-left: 11px; }
.lang { margin-left: 8px; width: 30px; margin-top: -5px; }
.tray { display: flex; gap: 8px; }
.tray svg { width: 16px; height: 18px; }
.clock { margin-left: 14px; width: 62px; text-align: center; line-height: 17px; letter-spacing: -.35px; }
.peek { margin-left: auto; margin-right: 1px; width: 13px; height: 39px; border: 1px solid #6c8cae; background: linear-gradient(160deg, #4f7399, #1d4473 60%); }

/* contact notification */
.toast { position: absolute; left: 1702px; top: 920px; width: 200px; height: 120px; border: 2px solid #f0f0f0; border-top-color: #ddd; border-left-color: #ddd; box-shadow: 1px 0 0 #777, inset -1px -1px 0 #fff; background: linear-gradient(#fff 0, #fbfdff 28%, #d3e3f6 55%, #b7d1ef 78%, #c2daf5 88%, #d5e6f9); color: #454b55; display: flex; flex-direction: column; padding: 4px 5px 2px 4px; font: 10.500px/13px "DejaVu Sans", sans-serif; }
.thead { display: flex; align-items: center; height: 18px; }
.thead svg { width: 16px; height: 16px; flex: none; }
.thead b { font: bold 14.400px/17px "Liberation Sans"; color: #5b9fd0; border-bottom: 1px solid #c9ccd2; margin-left: 4px; width: 150px; white-space: nowrap; }
.thead .tx { width: 14px; height: 14px; margin-left: 2px; }
.toast p { text-align: center; margin-top: 28px; letter-spacing: -.55px; white-space: nowrap; }
.conf { text-align: right; margin-top: auto; margin-bottom: 1px; letter-spacing: -.2px; }

/* map labels */
#map text { font-family: "Liberation Sans", sans-serif; fill: #555; }
#map .no { font-size: 28px; text-anchor: middle; fill: #666; }
#map .st { fill: #333; stroke: #fff; stroke-width: 4px; paint-order: stroke; stroke-opacity: .5; }
#map .poi { font-size: 33px; text-anchor: middle; fill: #55504c; stroke: #fff; stroke-width: 4px; paint-order: stroke; stroke-opacity: .6; }
#map .area { font-size: 38px; }
#map .mark { fill: #333; }
#map .mark .red { fill: #f33; }
#map .pop { fill: #111; font-size: 37px; }
```

FILE: map.js
```js
// Street map: the drawing plane is 3 units per screen pixel.
const out = [];
const R = 1020; // offset of the eastern half

const line = (d, w, c, extra = '') => `<path d="${d}" fill="none" stroke="${c}" stroke-width="${w}" stroke-linejoin="round" ${extra}/>`;
const fill = (d, c, extra = '') => `<path d="${d}" fill="${c}" ${extra}/>`;

out.push('<rect x="0" y="0" width="2100" height="1300" fill="#f6efd9"/>');

// [x, y, width, height, rotation]
const west = [
  [90,150,90,34,-16],[160,118,120,36,-16],[240,85,80,34,-16],[50,70,40,30,-16],[195,165,26,30,-16],[285,150,90,26,-16],[330,80,30,70,-16],
  [440,90,44,100,-10],[520,120,60,110,-14],[545,70,80,40,-14],[470,60,30,60,-14],[610,150,50,60,-14],[680,120,120,36,-14],[740,60,70,50,-14],
  [880,60,60,46,-14],[960,50,80,40,-14],[1000,100,60,30,-14],[640,50,90,36,-14],
  [170,215,70,28,-14],[275,215,90,28,-14],[355,165,30,60,-14],[110,270,50,30,-14],[350,235,60,26,-14],
  [360,315,130,26,-12],[140,365,140,26,-12],[240,380,80,34,-12],[260,415,60,26,-10],[360,465,50,80,-10],[350,420,44,44,-10],
  [595,280,90,26,-14],[760,240,100,36,-14],[560,255,40,22,-14],[850,200,40,70,-14],[945,180,30,90,-14],[1015,230,50,90,-14],
  [200,475,60,46,-10],[120,480,60,28,-10],[160,530,50,34,-20],[80,570,34,30,-20],[180,590,44,28,30],[250,555,40,24,30],[310,590,44,28,30],[370,570,28,22,30],
  [170,650,60,34,30],[245,640,30,24,30],[300,660,50,30,30],[215,700,60,34,30],[140,610,30,22,30],[285,720,60,36,32],[200,745,30,22,30],[245,790,54,30,34],
  [395,630,90,34,-52],[450,560,40,54,-40],[345,770,80,34,-52],[420,700,40,30,-50],[545,640,56,50,-30],
  [400,830,60,60,32],[440,900,90,30,32],[350,860,50,28,32],[480,770,40,26,32],[470,880,40,30,34],
  [560,790,40,110,-52],[610,720,90,36,30],[520,830,110,34,34],[640,840,40,90,-40],[600,770,30,40,34],[500,720,30,22,30],
  [635,565,36,28,-20],[700,560,50,30,-30],[660,610,34,28,30],[745,600,50,34,-40],[735,540,60,24,-18],[800,530,60,34,-25],[840,570,40,28,-40],[690,660,60,30,-48],[760,650,40,28,30],
  [785,690,30,24,30],[640,680,40,26,-48],[720,730,30,22,30],
  [860,680,34,26,30],[930,700,60,40,-40],[985,700,60,40,-45],[890,770,90,34,-50],[860,830,60,34,36],[1010,780,60,60,-45],[790,800,50,34,-45],[740,870,60,34,-50],[700,920,54,30,-48],[810,860,40,30,-45],[830,930,40,30,40],
  [700,990,60,30,-50],[620,990,60,60,-45],[600,1060,40,30,36],[660,1080,130,34,36],[740,1120,34,80,36],[850,1060,30,110,38],[890,1120,60,30,-50],[800,1160,70,34,36],[740,1060,80,26,-48],[900,990,44,30,-48],[960,930,60,34,-48],
  [90,890,70,34,36],[60,850,50,26,36],[130,830,40,24,36],[220,1000,90,36,36],[150,960,50,30,36],[290,1060,80,30,36],[260,1120,60,26,-50],[160,1090,50,60,-20],[150,1140,60,30,36],[100,1060,30,24,36],[90,1180,70,40,-20],[340,1110,60,30,36],[400,1170,50,30,40],[470,1190,50,34,40],[330,1200,40,26,36],[540,1180,40,24,36],[210,1200,44,26,-50],
];
const east = [
  [10,50,60,50,-14],[80,90,34,90,-14],[130,120,34,90,-12],[190,90,36,100,-12],[255,60,34,90,-12],[310,110,30,110,-12],[290,140,120,26,-14],[370,60,80,30,30],[420,100,80,30,32],[30,130,44,30,-14],[60,200,40,80,-14],[20,250,60,50,-14],
  [330,200,220,28,-14],[380,150,110,34,-14],[220,250,90,44,-10],[400,230,100,26,-14],[330,260,80,30,-14],[470,170,80,30,-14],[510,220,40,50,-14],[520,80,40,50,30],[180,300,60,26,-14],[100,330,30,60,-14],
  [450,320,120,30,-12],[400,340,50,26,-12],[470,390,60,44,34],[610,350,90,60,34],[640,400,60,40,34],[500,440,50,26,34],[360,400,60,28,36],[320,440,50,34,-45],[280,400,40,26,-10],[230,420,44,28,-20],
  [300,470,60,26,36],[250,500,36,24,36],[200,480,44,26,-45],[360,500,50,30,36],[210,560,44,60,-50],[310,560,34,100,-50],[370,580,70,28,-50],[420,550,50,28,36],[150,520,40,26,-40],[270,540,34,26,36],
  [460,540,36,26,36],[500,560,40,26,36],[550,590,60,30,36],[470,610,44,26,36],[500,640,60,28,36],[560,680,70,30,-50],[640,560,100,34,36],[700,500,60,50,36],[600,500,60,40,34],[720,440,60,34,34],[430,620,60,26,36],
  [800,560,34,80,-50],[850,520,70,28,-50],[790,610,50,28,36],[910,560,60,30,36],[940,610,44,60,30],[990,670,60,40,36],[900,650,50,30,36],[850,700,80,34,36],[830,750,50,26,36],[750,670,90,34,36],[700,640,50,30,-50],
  [740,780,60,50,30],[800,840,70,30,-50],[780,880,60,34,34],[640,760,50,30,-50],[640,820,40,24,36],[960,700,44,30,36],
  [90,640,50,34,-45],[150,680,60,34,-50],[60,700,60,34,36],[100,760,70,34,-50],[40,780,60,40,-50],[20,850,60,34,36],[40,640,40,28,36],
  [800,1020,34,130,28],[840,1090,110,30,30],[980,1150,60,30,30],
];
const building = ([x, y, w, h, a], dx, k) => {
  const roof = `transform="translate(${x + dx} ${y}) rotate(${a})"`;
  const base = `transform="translate(${x + dx} ${y + 10}) rotate(${a})"`;
  const r = `x="${-w / 2}" y="${-h / 2}" width="${w}" height="${h}"`;
  return `<rect ${r} ${base} fill="#dfd4ae"/><rect ${r} ${roof} fill="${k % 3 ? '#eae1bf' : '#e5dbb6'}" stroke="#e0d6b2" stroke-width="1.500"/>`;
};

// parks, courts and institutional plots
out.push(fill('M1680 20H2030V548L1885 440 1610 215Z', '#cfe1c0'));
out.push(fill('M1640 20H1700L1625 215 1580 165Z', '#f5eed6'));
const alleys = 'M1735 20L1700 120 1660 260M1700 120L1960 290 2030 350M1760 20L2030 170M1860 20Q1890 90 2030 130M1690 90L1960 320M1960 290L1870 410M2030 60L1830 240 1810 270M1990 160L1900 330';
out.push(line(alleys, 10, '#ecefcf'), line(alleys, 3, '#bcd3a9', 'stroke-dasharray="4 9"'));
out.push(fill('M1930 290L2000 340 1900 440 1860 405Z', '#f5eed0'));
out.push(fill('M1990 300L2030 270V350Z', '#ece0bd'));
out.push(fill('M1795 220l40 30-14 22-40-28z', '#f0eed0'));
out.push(fill('M260 440l34-10 6 46-36 12zM245 1185l40-34 32 24-42 38z', '#dde0ab'));
out.push(fill('M860 500Q900 460 940 480L900 520Z', '#d2d69c'));
out.push(fill('M790 20H850L872 110 815 126Z', '#e4e3e3'));
out.push(fill('M1890 815L2030 905V1229H1990L1780 1100 1765 950Z', '#e8e7e9'));

west.forEach((b, i) => out.push(building(b, 0, i)));
east.forEach((b, i) => out.push(building(b, R, i)));

// grey industrial blocks
['M1890 820l-70 100 50 40 50-80 60 40 10-20z', 'M1950 860l60 45v30l-70-45z', 'M1950 940l60 30-20 50-60-30z', 'M1930 1010l80 40-20 40-80-40z', 'M1860 1020l30 20-15 25-35-20z', 'M1960 1080l50 20v30l-60-20z', 'M540 730l50-60 14 8-56 62z', 'M575 745l50-74 12 8-54 74z', 'M775 1020l60-60 20 14-50 60z', 'M200 1190l36-46 6 10-36 44z', 'M510 705l12-8 10 10-10 8z', 'M1255 505l14 12-10 12-14-12z'].forEach(d => out.push(fill(d, '#d3d2da', 'stroke="#c2c1ca" stroke-width="2"')));

// minor lanes
const lanes = 'M410 425L470 380M595 540L625 625 550 695 520 690 455 655M840 730L945 820 850 945M1120 218L1165 350M1165 320L1260 290 1320 245 1465 200';
out.push(line(lanes, 12, '#ddd4b6'), line(lanes, 8, '#fff'));

// streets
const streets = [
  ['M0 128L345 32 420 0', 24], ['M345 20L430 230 545 545', 24],
  ['M0 372L420 257 880 140 1360 22', 33], ['M1340 20Q1430 20 1560 130Q1600 170 1600 250', 32],
  ['M885 140L935 300 980 450', 24], ['M0 1235L210 935 280 845 490 590Q530 545 570 535L900 455 1160 395 1310 345 1560 265 1600 245', 33],
  ['M520 1060L1000 475', 25], ['M985 455L1265 672', 24], ['M1330 340L1700 640 2030 895', 27],
  ['M1600 250L1830 440 2030 590', 62], ['M1845 475L1600 790', 26], ['M1735 1085L1970 1245', 27], ['M370 1240L470 1140', 24], ['M20 26L28 130M20 270L26 350', 10],
];
streets.forEach(([d, w]) => out.push(line(d, w + 3, '#d6cfb8')));
streets.forEach(([d, w]) => out.push(line(d, w, '#fff')));
out.push(line('M1650 280L1990 560', 7, '#d6e0c4'), '<circle cx="1610" cy="243" r="13" fill="#cfe1c0"/>');

// avenue with a tram boulevard between the carriageways
out.push(line('M0 702L700 1240', 120, '#edebc6'));
out.push(line('M0 702L700 1240', 48, '#cfdfc4'), line('M0 702L700 1240', 16, '#e6e8cc'));
out.push(line('M0 702L700 1240', 2, '#e0705c'), line('M0 702L700 1240', 9, '#e0705c', 'stroke-dasharray="3 17"'));
for (const d of ['M0 645L770 1245', 'M0 765L620 1245']) out.push(line(d, 42, '#d6a35c'), line(d, 38, '#fcc47c'));
out.push(line('M195 940L290 835', 30, '#fff'));

// boulevard round the square
const ring = 'M810 1250L1265 660Q1310 610 1385 625Q1430 640 1560 745L1665 835Q1716 880 1716 960V1050Q1710 1130 1610 1245';
out.push(fill(ring + 'Z', '#cfe1c0'));
out.push(`<clipPath id="sq"><path d="${ring}Z"/></clipPath><g clip-path="url(#sq)">`);
out.push(fill('M1290 690L1360 700 1420 710 1530 790 1480 830 1370 790Z', '#f5f4dc'));
out.push(fill('M1450 880Q1500 840 1530 880Q1540 920 1500 950L1420 960 1400 930Z', '#f5f4dc'));
const walks = 'M1290 690L1100 1230M1260 780L1440 1000 1300 1240M1285 720L1345 850 1370 950M1530 800Q1620 950 1620 1240M1550 810L1230 1240M1580 820L1320 1180M1020 980L1290 1210 1720 1210M1090 900L1440 1000 1700 1080M960 1080L1240 1040M1210 860Q1190 960 1250 1030M1560 820L1700 1060M1300 1040L1560 1240M1440 1010L1560 1190M1250 1180L1200 1240M1500 960Q1620 1010 1700 1060M1040 1060L1160 1240M1420 870L1280 1080';
out.push(line(walks, 11, '#f5f4dc'), line(walks, 2, '#bdd3ab', 'stroke-dasharray="4 8"'));
out.push('<circle cx="1258" cy="1188" r="27" fill="#cfe1c0" stroke="#f5f4dc" stroke-width="8"/><circle cx="1362" cy="718" r="17" fill="#cfe1c0"/><path d="M1395 735l34-20 34 30-20 40z" fill="#e4d9b8"/><path d="M1400 940l70-50 30 30-60 46z" fill="#ddd2b0"/></g>');
out.push(line(ring, 42, '#d3b558'), line(ring, 38, '#fbe390'));
const tram = 'M845 1240L1288 668Q1330 630 1385 645Q1420 655 1545 765L1650 850Q1697 890 1697 960V1050Q1690 1120 1595 1240';
out.push(line(tram, 2, '#e5663f'), line(tram, 8, '#e5663f', 'stroke-dasharray="2 12"'));

// house numbers
const nums = '5,54,46;10,387,30;9,153,121;7,318,86;8,441,91;273,618,82;33,936,46;29А,713,30;19/21,257,155;21,360,182;23,504,148;25,603,162;27,690,154;16,792,187;2,855,202;18А,936,176;15Б,174,223;17,270,247;19,348,244;10,525,283;12,606,262;14,735,253;2А,884,268;5,1020,270;13,135,283;8,366,325;6,123,391;8А,254,388;3,381,424;4А,224,469;4,54,533;32,174,559;28А,291,556;3А,305,622;5,420,618;11,593,508;12,783,520;5А,860,535;10,699,574;6,681,634;5,774,649;4,552,655;30,124,697;3Б,276,718;2А,434,727;5Б,692,700;8А,944,739;4,1017,727;1,249,787;2,357,805;1А,563,787;1,632,826;35,51,880;26,348,874;24,420,928;4,741,895;2К,818,883;2,627,988;33,228,1009;20А,765,1039;31,315,1096;1,159,1105;1А,221,1122;29,390,1126;6А,107,1183;2Б,377,1189;1,890,1093;20,818,1183;27,486,1226;37Б,1611,76;24,1350,92;20,1218,124;18,1146,157;22А,1295,188;26,1533,217;21Т,1094,260;26,1434,364;20,1215,436;2,1371,424;8,1437,463;4,1365,499;10,1497,535;5,1671,535;13,1230,571;7,1383,570;12,1572,574;6,1899,577;8,1110,637;9,1515,667;12Б,1596,658;4А,1968,664;6,1197,706;11,1895,712;2,1086,820;14А,1763,790;15,2012,817;14Б,1829,853;10,1738,862;11,1811,916;18,1893,925;12А,1838,1037;7,1998,1228';
nums.split(';').forEach(s => { const [t, x, y] = s.split(','); out.push(`<text class="no" x="${x}" y="${+y + 10}">${t}</text>`); });

// street names along their axes: [text, path, size, length]
const names = [
  ['Крутогорний спуск', 'M417 242L537 545', 33, 318], ['ул. Владимира', 'M1106 84L1358 30', 35, 250], ['Вернадского', 'M1362 24Q1460 40 1562 132', 35, 216],
  ['ул. Владимира Винниченко', 'M642 938L938 568', 33, 470], ['Сергія Ефремова', 'M1108 404L1385 328', 33, 280],
  ['Євгенія Коновальця', 'M950 440L1230 663', 34, 352], ['площа Шевченка', 'M1703 322L1908 487', 33, 260],
  ['ул. Яворницкого', 'M1640 752L1810 526', 34, 280], ['Соборна площа', 'M992 1040L1176 812', 35, 288], ['Соборная пл.', 'M1494 720L1706 907', 40, 278],
  ['Яворницького', 'M-8 630L266 868', 44, 356], ['Коссаковського', 'M10 1194L156 1016', 30, 224],
];
names.forEach(([t, d, s, l], i) => out.push(`<path id="n${i}" d="${d}" fill="none"/><text class="st" font-size="${s}"><textPath href="#n${i}" textLength="${l}" lengthAdjust="spacingAndGlyphs">${t}</textPath></text>`));

// one-way arrows
[[48, 810, 37], [232, 960, 37], [480, 1150, 37], [1246, 698, 130], [1734, 1058, -90], [1595, 195, 100], [1608, 220, 180], [1564, 250, 140], [1588, 248, 75], [1628, 255, -50], [1616, 285, 35], [1980, 530, 215], [2006, 565, -85], [2015, 600, 40]].forEach(([x, y, a]) => out.push(`<path d="M-13 0H10M4-4L12 0 4 4z" transform="translate(${x} ${y}) rotate(${a})" stroke="#555" stroke-width="2.500" fill="#555"/>`));

// stops
[[390, 256], [474, 259], [339, 910], [309, 932], [837, 1209], [1572, 144], [1662, 219], [1566, 796], [1608, 811], [1704, 856]].forEach(([x, y]) => out.push(`<g transform="translate(${x} ${y})"><rect x="-18" y="-18" width="36" height="36" rx="3" fill="#3d7cbf" stroke="#fff" stroke-width="2"/><rect x="-9" y="-10" width="18" height="17" rx="3" fill="none" stroke="#fff" stroke-width="3"/><path d="M-9 0H9M-7 8v4M7 8v4" stroke="#fff" stroke-width="4"/></g>`));

// places
const poi = (x, y, icon) => `<circle cx="${x}" cy="${y}" r="29" fill="#faf5e6" opacity=".9"/><g transform="translate(${x} ${y})">${icon}</g>`;
const B = '#78604e';
out.push(poi(206, 283, `<circle cx="-7" r="12" fill="none" stroke="${B}" stroke-width="6"/><circle cx="8" r="12" fill="none" stroke="${B}" stroke-width="6"/>`));
out.push(poi(517, 967, `<path d="M-14-10H18L12 8H-8Z" fill="${B}"/><path d="M-20-14h6l8 26h20" fill="none" stroke="${B}" stroke-width="3.500"/><circle cx="-4" cy="20" r="4.500" fill="${B}"/><circle cx="11" cy="20" r="4.500" fill="${B}"/>`));
out.push(poi(1003, 598, `<g fill="${B}"><circle cx="-10" cy="-19" r="5"/><path d="M-21-12h20l4 14-5 1-3-7v26h-4V6h-4v16h-4V-4l-3 7-5-1z"/><circle cx="15" cy="-5" r="4.500"/><path d="M5 1h18l3 8-4 1v12h-5v-8h-4v8H8V10H3z"/></g>`));
out.push(poi(1617, 383, `<path d="M-12-14H14V8H-8V20h-4z" fill="${B}"/>`));
out.push(poi(1407, 755, `<path d="M-18-8L0-20 18-8zM-12-4h5V12h-5zM-2-4h5V12h-5zM8-4h5V12H8zM-16 14h32v5h-32z" fill="${B}"/>`));
out.push(poi(1467, 908, `<path d="M0-22V22M-15-8H15" stroke="${B}" stroke-width="6"/>`));
[['РАГС', 203, 341, 80], ['Атриум', 520, 1028, 108], ['Школа', 1003, 656, 96], ['№ 67', 1003, 692, 78], ['Районный совет', 1617, 443, 243], ['Жовтневого района', 1617, 480, 296], ['Музей спорта', 1410, 812, 204], ['и революции', 1405, 849, 192], ['Преображенский собор', 1470, 978, 356]].forEach(([t, x, y, l]) => out.push(`<text class="poi" x="${x}" y="${y}" textLength="${l}" lengthAdjust="spacingAndGlyphs">${t}</text>`));
out.push('<text class="poi area" x="1279" y="1119" textLength="180">Соборная</text><text class="poi area" x="1279" y="1151" textLength="164">площадь</text>');

// provider mark and copyright
out.push('<text class="mark" x="1853" y="1164" font-size="64" textLength="158" lengthAdjust="spacingAndGlyphs"><tspan class="red">Я</tspan>ндекс</text>');
out.push('<text class="mark" x="1500" y="1202" font-size="29" textLength="508" lengthAdjust="spacingAndGlyphs">© Яндекс – <tspan text-decoration="underline">Условия использования</tspan></text>');

// zoom control
out.push('<rect x="40" y="254" width="74" height="542" rx="10" fill="#8e9fae" opacity=".45"/>');
for (let y = 332; y < 730; y += 21.5) out.push(`<rect x="${y % 2 ? 52 : 55}" y="${y}" width="46" height="6" fill="#fff" opacity=".75"/>`);
for (const y of [262, 732]) out.push(`<rect x="47" y="${y}" width="60" height="60" rx="9" fill="#fbfbfc" stroke="#8391a0" stroke-width="3"/>`);
out.push('<path d="M57 293H97M57 763H97M77 743V783" stroke="#566880" stroke-width="8"/><rect x="40" y="661" width="76" height="25" rx="10" fill="#f6f9ff" stroke="#5973b5" stroke-width="3"/>');

// address balloon
out.push('<defs><linearGradient id="sh" x1="0" y1="0" x2="0" y2="1"><stop offset="0" stop-color="#666" stop-opacity=".2"/><stop offset=".6" stop-color="#555" stop-opacity=".5"/><stop offset="1" stop-color="#777" stop-opacity=".3"/></linearGradient></defs>');
out.push('<path d="M500 474H1153V430Q1175 450 1172 480 1170 518 1130 518H1090Q1060 540 1036 605 1070 550 1048 518H600Q540 518 500 474Z" fill="url(#sh)"/>');
out.push('<path d="M485 290H1130Q1153 290 1153 313V452Q1153 475 1130 475H1090Q1078 480 1076 510 1070 560 1034 607 1056 560 1054 520 1052 480 1036 475H485Q462 475 462 452V313Q462 290 485 290Z" fill="#fff" stroke="#737373" stroke-width="3"/>');
out.push('<text class="pop" x="484" y="350" textLength="221" font-weight="bold">Школа №67</text><text class="pop" x="484" y="396" textLength="254">пер. Урицкого,</text><text class="pop" x="484" y="440" textLength="497">6, г. Днепропетровск, 49027</text>');
out.push('<rect x="1093" y="314" width="36" height="36" rx="4" fill="#fff" stroke="#555" stroke-width="3"/><path d="M1101 322l20 20M1121 322l-20 20" stroke="#444" stroke-width="5"/>');

document.getElementById('map').innerHTML = out.join('');
```
